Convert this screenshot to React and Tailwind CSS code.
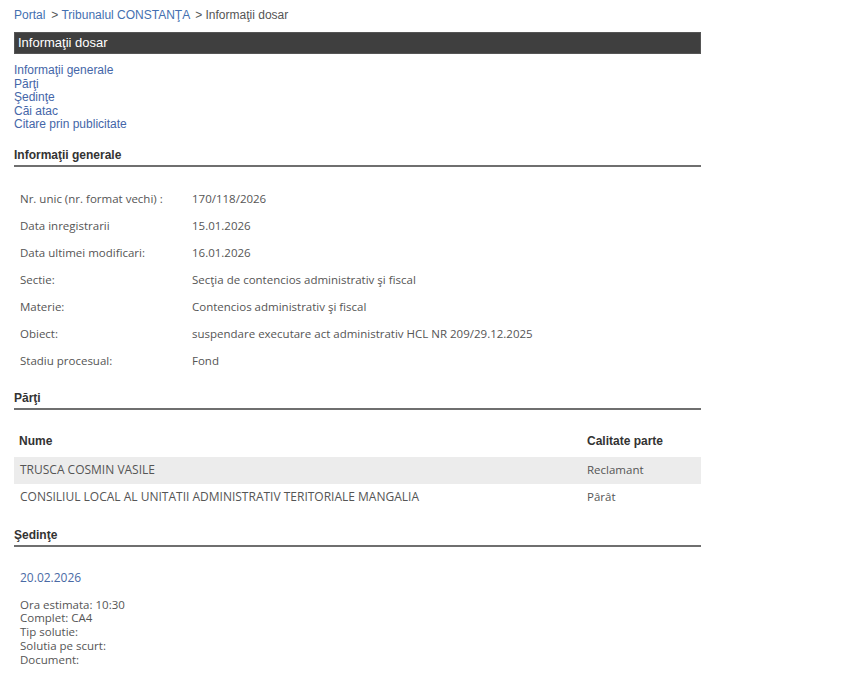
import React from "react";

const generalInfo = [
  ["Nr. unic (nr. format vechi) :", "170/118/2026"],
  ["Data inregistrarii", "15.01.2026"],
  ["Data ultimei modificari:", "16.01.2026"],
  ["Sectie:", "Secţia de contencios administrativ şi fiscal"],
  ["Materie:", "Contencios administrativ şi fiscal"],
  ["Obiect:", "suspendare executare act administrativ HCL NR 209/29.12.2025"],
  ["Stadiu procesual:", "Fond"],
];

const parti = [
  ["TRUSCA COSMIN VASILE", "Reclamant"],
  ["CONSILIUL LOCAL AL UNITATII ADMINISTRATIV TERITORIALE MANGALIA", "Pârât"],
];

const SectionTitle = ({ children }) => (
  <div className="font-['Liberation_Sans',Arial,sans-serif] font-bold text-[12px] leading-[14px] text-[#333] pb-[3px] border-b-2 border-[#6f6f6f]">
    {children}
  </div>
);

export default function App() {
  return (
    <div className="min-h-screen bg-white">
      <div className="ml-[14px] w-[687px] pt-[8px] font-['Open_Sans',Verdana,sans-serif]">
        {/* Breadcrumb */}
        <div className="text-[12px] leading-[14px] text-[#555] font-['Liberation_Sans',Arial,sans-serif]">
          <span className="text-[#4470b0]">Portal</span>
          <span className="ml-[6px]">&gt; </span>
          <span className="text-[#4470b0]">Tribunalul CONSTANŢA</span>
          <span className="ml-[5px]">&gt; Informaţii dosar</span>
        </div>

        {/* Dark title bar */}
        <div className="mt-[10px] h-[22px] bg-[#3f3f3f] border border-[#555] flex items-center pl-[3px] text-white text-[13px] font-['Liberation_Sans',Arial,sans-serif]">
          Informaţii dosar
        </div>

        {/* Anchor links */}
        <div className="mt-[10px] flex flex-col text-[12px] leading-[13.5px] text-[#4466a8] font-['Liberation_Sans',Arial,sans-serif]">
          <a>Informaţii generale</a>
          <a>Părţi</a>
          <a>Şedinţe</a>
          <a>Căi atac</a>
          <a>Citare prin publicitate</a>
        </div>

        {/* Informatii generale */}
        <div className="mt-[16px]">
          <SectionTitle>Informaţii generale</SectionTitle>
        </div>
        <div className="mt-[19px] text-[11.5px] text-[#555]">
          {generalInfo.map(([label, value]) => (
            <div key={label} className="flex h-[27px] items-center">
              <div className="w-[178px] pl-[6px]">{label}</div>
              <div>{value}</div>
            </div>
          ))}
        </div>

        {/* Parti */}
        <div className="mt-[16px]">
          <SectionTitle>Părţi</SectionTitle>
        </div>
        <div className="mt-[17px] text-[12px] text-[#555]">
          <div className="flex h-[30px] items-center pb-[2px] font-['Liberation_Sans',Arial,sans-serif] font-bold text-[12px] text-[#333]">
            <div className="w-[573px] pl-[5px]">Nume</div>
            <div>Calitate parte</div>
          </div>
          {parti.map(([nume, calitate], i) => (
            <div
              key={nume}
              className={`flex h-[27px] items-center ${i % 2 === 0 ? "bg-[#ececec]" : ""}`}
            >
              <div className="w-[573px] pl-[6px]">{nume}</div>
              <div className="text-[11.5px]">{calitate}</div>
            </div>
          ))}
        </div>

        {/* Sedinte */}
        <div className="mt-[17px]">
          <SectionTitle>Şedinţe</SectionTitle>
        </div>
        <div className="mt-[24px] pl-[6px] text-[11.5px]">
          <div className="text-[#4a6aa5] text-[12px] leading-[14px]">20.02.2026</div>
          <div className="mt-[13px] text-[#555] leading-[13.8px]">
            <div>Ora estimata: 10:30</div>
            <div>Complet: CA4</div>
            <div>Tip solutie:</div>
            <div>Solutia pe scurt:</div>
            <div>Document:</div>
          </div>
        </div>
      </div>
    </div>
  );
}
